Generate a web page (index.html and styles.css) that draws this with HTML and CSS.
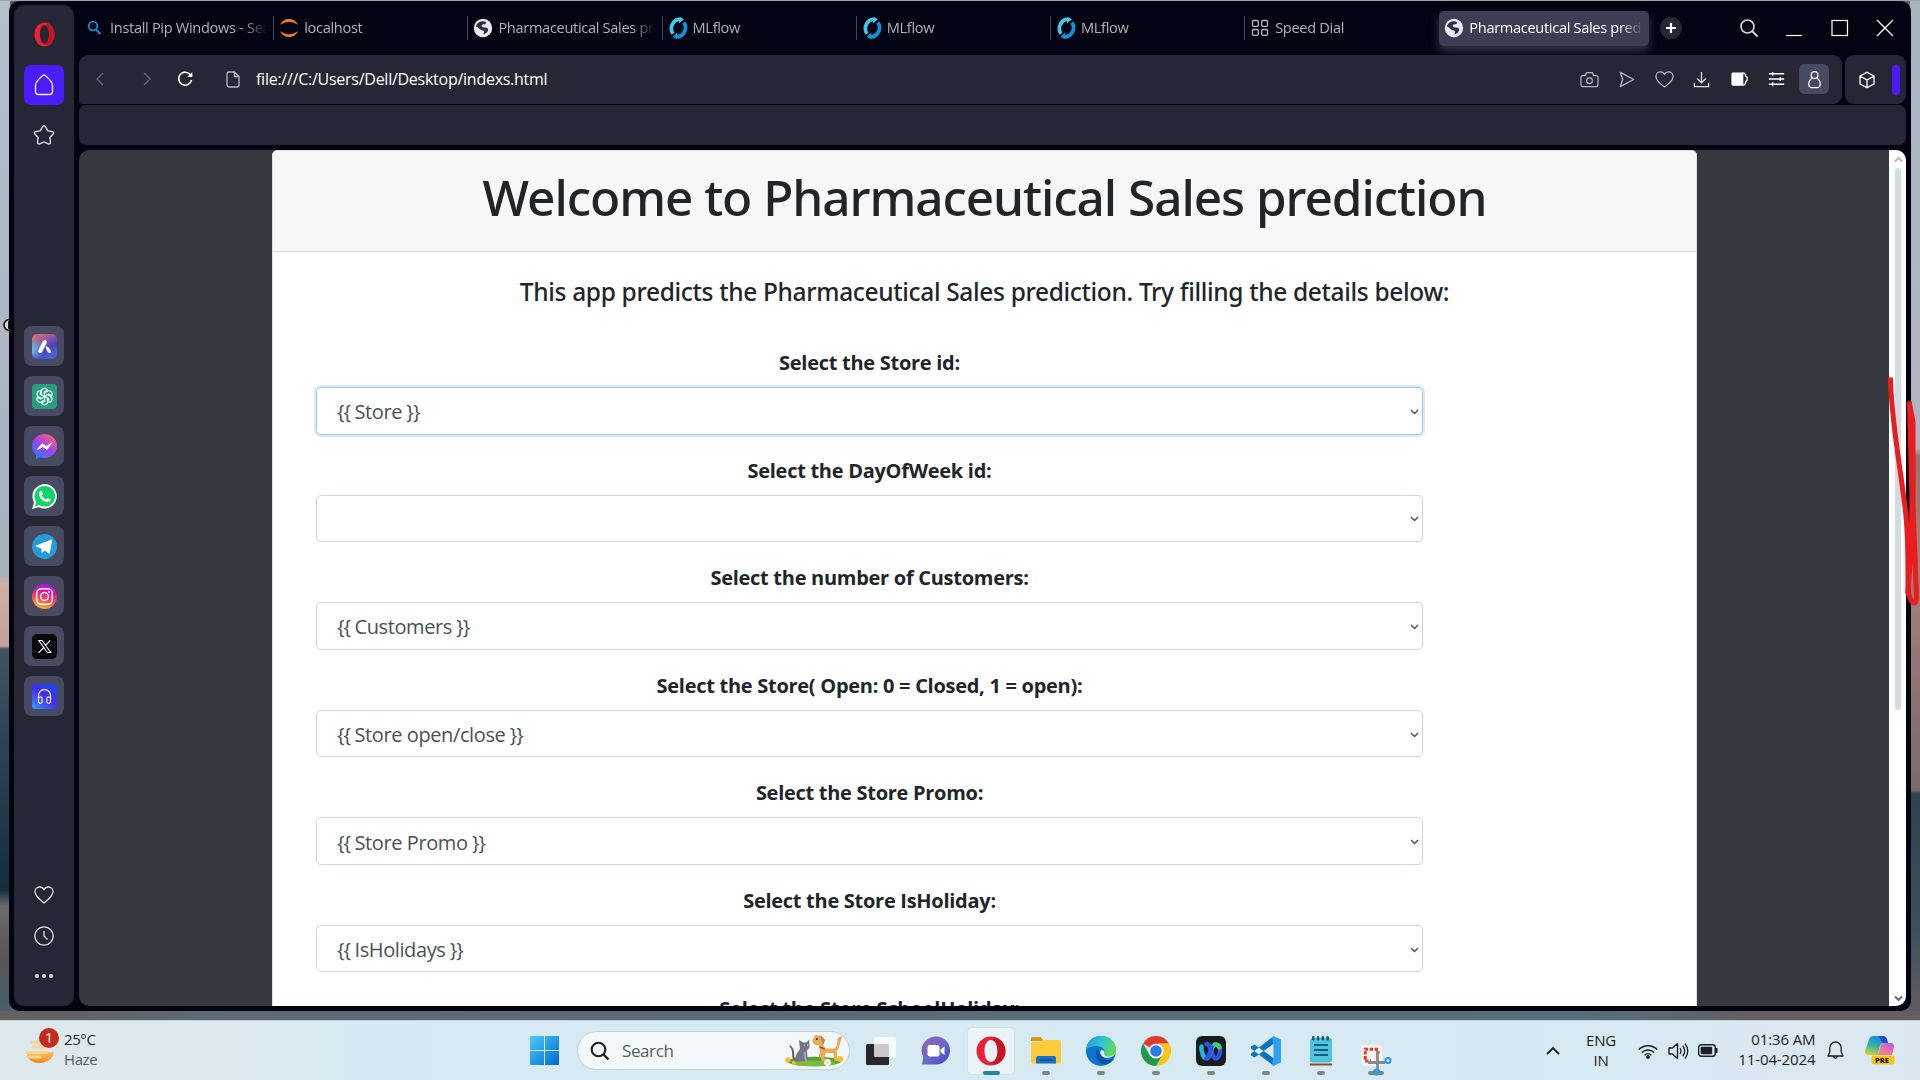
FILE: index.html
```html
<!DOCTYPE html>
<html lang="en">
<head>
<meta charset="utf-8">
<title>Pharmaceutical Sales prediction</title>
<link rel="stylesheet" href="styles.css">
</head>
<body>
<svg class="defs" width="0" height="0">
  <symbol id="globe" viewBox="0 0 20 20">
    <circle cx="10" cy="10" r="9.2" fill="#e6e9ef"/>
    <path d="M8 3.500c3-.8 5.500.3 5 1.800-1 1.500-3.500.4-4.300 2.300-.5 1.700 2 1.900 4 2 2.200.2 3 2 2 3.600-1 1.800-2.600 2.600-4.300 3.300l.8-3c-1.300-1.600-4.200-1.500-5.800-3.500-1-1.200-2-.8-2.600-1.200C3.200 6 5 4.300 8 3.500z" fill="#2c3040"/>
  </symbol>
  <symbol id="mlflow" viewBox="0 0 20 24">
    <path d="M4.500 18.300A9 10 0 0 1 13.800 2.800" fill="none" stroke="#43c9ed" stroke-width="4"/>
    <path d="M11.800 0 16.500 2.500 11 7z" fill="#43c9ed"/>
    <path d="M16.500 6A9 10 0 0 1 6.500 21.200" fill="none" stroke="#0b94e0" stroke-width="4"/>
    <path d="M9.200 16.500 9 23.500 4 21.500z" fill="#0b94e0"/>
  </symbol>
  <symbol id="opera" viewBox="0 0 30 30">
    <path fill-rule="evenodd" d="M15 .5a14.500 14.500 0 1 0 0 29a14.500 14.500 0 1 0 0-29zM15 4c4 0 6.500 4.600 6.500 11S19 26 15 26s-6.500-4.600-6.500-11S11 4 15 4z" fill="#ee1f36"/>
    <path d="M15 4c4 0 6.500 4.600 6.500 11S19 26 15 26c2.500 2.500 6.500 2.500 9.500 0 6.700-6 6.700-16 0-22-3-2.500-7-2.500-9.500 0z" fill="#b9101f" opacity=".75"/>
  </symbol>
  <symbol id="heart" viewBox="0 0 20 18">
    <path d="M10 17C4 12.500 1 9.500 1 5.800 1 3 3 1 5.500 1 7.500 1 9.200 2 10 3.800 10.800 2 12.500 1 14.500 1 17 1 19 3 19 5.800c0 3.700-3 6.700-9 11.200z" fill="none" stroke="currentColor" stroke-width="1.300" stroke-linejoin="round"/>
  </symbol>
</svg>

<div class="desktop">
  <div class="window">
    <aside class="sidebar">
      <a class="logo"><svg width="21" height="25" viewBox="0 0 30 30" preserveAspectRatio="none"><use href="#opera"/></svg></a>
      <a class="home"><svg width="20" height="22" viewBox="0 0 20 22"><path d="M1.500 11.500C1.500 8 7 3 8.800 1.500q1.200-.9 2.400 0C13 3 18.500 8 18.500 11.500V17.500a3 3 0 0 1-3 3h-11a3 3 0 0 1-3-3z" fill="none" stroke="#efeaff" stroke-width="1.400"/></svg></a>
      <a class="star"><svg width="22" height="21" viewBox="0 0 22 21"><path d="M9.700 1.500q1.300-1.600 2.600 0l2.300 4.200 4.700.9q2 .7.800 2.400l-3.200 3.500.6 4.900q-.2 2-2.200 1.400L11 16.900l-4.300 1.900q-2 .6-2.200-1.400l.6-4.900L1.900 9q-1.200-1.700.8-2.400l4.700-.9z" fill="none" stroke="#d9dbe4" stroke-width="1.400"/></svg></a>

      <div class="apps">
        <a class="app"><svg width="25" height="25" viewBox="0 0 25 25"><defs><linearGradient id="ga" x1="0" y1="0" x2=".6" y2="1"><stop offset="0" stop-color="#e8704a"/><stop offset=".35" stop-color="#a05c9c"/><stop offset=".7" stop-color="#4b41c0"/><stop offset="1" stop-color="#4763d8"/></linearGradient><radialGradient id="gb" cx="0" cy=".62" r=".5"><stop offset="0" stop-color="#62c6ea"/><stop offset="1" stop-color="#62c6ea" stop-opacity="0"/></radialGradient></defs><rect width="25" height="25" rx="5" fill="url(#ga)"/><rect width="25" height="25" rx="5" fill="url(#gb)"/><path d="M12.800 8 8.200 17" stroke="#fff" stroke-width="4" stroke-linecap="round"/><path d="M13.500 12.300c2.500 0 5.500 2.500 5.500 6.500-2 1.500-4.500-1.500-5.500-6.500z" fill="#fff"/></svg></a>
        <a class="app"><svg width="25" height="25" viewBox="0 0 25 25"><rect width="25" height="25" rx="4" fill="#2a9d80"/><g fill="none" stroke="#e8fff8" stroke-width="1.200" transform="translate(12.500 12.500)"><g id="petal"><path d="M-3.200-1.700V-5a3.300 3.300 0 0 1 6.200-1.500L-.2-4.700V.2"/></g><use href="#petal" transform="rotate(60)"/><use href="#petal" transform="rotate(120)"/><use href="#petal" transform="rotate(180)"/><use href="#petal" transform="rotate(240)"/><use href="#petal" transform="rotate(300)"/></g></svg></a>
        <a class="app"><svg width="25" height="25" viewBox="0 0 25 25"><defs><linearGradient id="gm" x1=".1" y1="1" x2=".8" y2="0"><stop offset="0" stop-color="#168bff"/><stop offset=".5" stop-color="#9c40f5"/><stop offset="1" stop-color="#ff5f72"/></linearGradient></defs><path d="M12.500 0C5.500 0 0 5 0 12c0 3.600 1.500 6.500 4 8.600V25l4-1.800c1.400.4 3 .7 4.500.7C19.500 23.900 25 19 25 12S19.500 0 12.500 0z" fill="url(#gm)"/><path d="M5 15.800 10.200 9.500l4 3L20 8.800 15 15.500l-4.300-3z" fill="#fff" stroke="#fff" stroke-linejoin="round"/></svg></a>
        <a class="app"><svg width="25" height="25" viewBox="0 0 25 25"><path d="M12.700 0A12.300 12.300 0 0 0 2 18.400L0 25l6.800-1.800A12.300 12.300 0 1 0 12.700 0z" fill="#fff"/><path d="M12.700 2a10.300 10.300 0 0 0-8.500 16l-1.300 4.200 4.400-1.200A10.300 10.300 0 1 0 12.700 2z" fill="#0fd467"/><path d="M8.700 6.700c.5-.2 1 0 1.200.5l1 2.400c.1.500-1 1.400-1 1.800.8 1.800 2.400 3.100 4.200 3.900.6 0 1.300-1.500 1.800-1.400l2.500 1.300c.5.500-.2 2.200-1 2.600-4.500 2-10.200-3.500-10.500-7.800 0-1.500.9-3 1.800-3.300z" fill="#fff"/></svg></a>
        <a class="app"><svg width="25" height="25" viewBox="0 0 25 25"><circle cx="12.500" cy="12.500" r="12.500" fill="#279bd6"/><path d="M4 12 19.800 5.800 17.200 19.300 12.700 16 10.200 18.500 9.700 14.200z" fill="#fff" stroke="#fff" stroke-linejoin="round" stroke-width=".8"/></svg></a>
        <a class="app"><svg width="25" height="25" viewBox="0 0 25 25"><defs><linearGradient id="gi" x1=".3" y1="1" x2=".6" y2="0"><stop offset="0" stop-color="#ffc62a"/><stop offset=".4" stop-color="#fb4a4f"/><stop offset=".7" stop-color="#e40fa4"/><stop offset="1" stop-color="#9d18ff"/></linearGradient></defs><circle cx="12.500" cy="12.500" r="12.500" fill="url(#gi)"/><g fill="none" stroke="#fff" stroke-width="1.500"><rect x="4.700" y="4.700" width="15.600" height="15.600" rx="4.500"/><circle cx="12.500" cy="12.500" r="3.900"/></g><circle cx="17" cy="8" r="1.100" fill="#fff"/></svg></a>
        <a class="app"><svg width="25" height="25" viewBox="0 0 25 25"><rect width="25" height="25" rx="5" fill="#08090b"/><path d="M6.800 6.500h3.300l8.600 12h-3.300zM18.200 6.300l-5 5.500M11.800 13.300l-5.200 5.500" fill="none" stroke="#fff" stroke-width="1.100"/></svg></a>
        <a class="app"><svg width="25" height="25" viewBox="0 0 25 25"><defs><linearGradient id="gp" x1="0" y1="1" x2=".8" y2="0"><stop offset="0" stop-color="#399cf2"/><stop offset=".55" stop-color="#442cf4"/><stop offset="1" stop-color="#1c49e3"/></linearGradient></defs><rect width="25" height="25" rx="3" fill="url(#gp)"/><g fill="none" stroke="#dcd8ff" stroke-width="1.300"><path d="M6.500 15.500V11.500a6 6 0 0 1 12 0V15.500"/><rect x="6.500" y="12.800" width="3.700" height="6.500" rx="1.700"/><rect x="14.800" y="12.800" width="3.700" height="6.500" rx="1.700"/></g></svg></a>
      </div>

      <div class="side-tools">
        <svg width="20" height="18"><use href="#heart"/></svg>
        <svg width="20" height="20" viewBox="0 0 20 20"><circle cx="10" cy="10" r="9.200" fill="none" stroke="currentColor" stroke-width="1.300"/><path d="M10 5v5l3.500 3.500" fill="none" stroke="currentColor" stroke-width="1.300"/></svg>
        <svg width="20" height="6" viewBox="0 0 20 6"><g fill="currentColor"><circle cx="3" cy="3" r="2"/><circle cx="10" cy="3" r="2"/><circle cx="17" cy="3" r="2"/></g></svg>
      </div>
    </aside>

    <main class="main">
      <div class="tabbar">
        <div class="tab"><svg class="ico" viewBox="0 0 20 20"><circle cx="8" cy="8" r="4.300" fill="none" stroke="#1c86dc" stroke-width="1.800"/><path d="m11 11.500 4.500 4.500" stroke="#1c86dc" stroke-width="1.900"/></svg><span>Install Pip Windows - Sea</span></div>
        <div class="tab"><svg class="ico" viewBox="0 0 20 20"><path d="M1 6.800Q4 1 10 1t9 5.800Q14 3.700 10 3.700T1 6.800zM1 13.200Q4 19 10 19t9-5.800q-5 3.100-9 3.100t-9-3.100z" fill="#ef7e2e"/></svg><span>localhost</span></div>
        <div class="tab"><svg class="ico"><use href="#globe"/></svg><span>Pharmaceutical Sales pre</span></div>
        <div class="tab"><svg class="ico"><use href="#mlflow"/></svg><span>MLflow</span></div>
        <div class="tab"><svg class="ico"><use href="#mlflow"/></svg><span>MLflow</span></div>
        <div class="tab"><svg class="ico"><use href="#mlflow"/></svg><span>MLflow</span></div>
        <div class="tab last"><svg class="ico" viewBox="0 0 20 20"><g fill="none" stroke="#b4b7c2" stroke-width="1.300"><rect x="2.500" y="2.500" width="5.800" height="5.800" rx="1"/><rect x="11.700" y="2.500" width="5.800" height="5.800" rx="1"/><rect x="2.500" y="11.500" width="5.800" height="5.800" rx="1"/><rect x="11.700" y="11.500" width="5.800" height="5.800" rx="1"/></g></svg><span>Speed Dial</span></div>
        <div class="tab active"><svg class="ico"><use href="#globe"/></svg><span>Pharmaceutical Sales pred</span></div>
        <div class="plus"><svg width="12" height="12" viewBox="0 0 12 12"><path d="M6 1v10M1 6h10" stroke="#fff" stroke-width="2.200"/></svg></div>
        <div class="winctl">
          <svg viewBox="0 0 20 20"><circle cx="8.500" cy="8.500" r="6.500" fill="none" stroke="#d6d8de" stroke-width="1.600"/><path d="m13 13 5.500 5.500" stroke="#d6d8de" stroke-width="1.800"/></svg>
          <svg viewBox="0 0 20 20"><path d="M2 17.500h16" stroke="#fff" stroke-width="1.200"/></svg>
          <svg viewBox="0 0 20 20"><rect x="2" y="2.500" width="15.500" height="15" fill="none" stroke="#fff" stroke-width="1.200"/></svg>
          <svg viewBox="0 0 20 20"><path d="m2 2 16 16M18 2 2 18" stroke="#fff" stroke-width="1.300"/></svg>
        </div>
      </div>

      <div class="toolbar">
        <div class="address">
          <span class="nav back"><svg width="10" height="14" viewBox="0 0 10 14"><path d="M8 1 2 7l6 6" fill="none" stroke="#656976" stroke-width="1.300"/></svg></span>
          <span class="nav fwd"><svg width="10" height="14" viewBox="0 0 10 14"><path d="m2 1 6 6-6 6" fill="none" stroke="#656976" stroke-width="1.300"/></svg></span>
          <span class="nav reload"><svg width="18" height="18" viewBox="0 0 18 18"><path d="M14.500 5A6.500 6.500 0 1 0 15.500 10" fill="none" stroke="#fff" stroke-width="1.600"/><path d="M16.300 2v5h-5z" fill="#fff"/></svg></span>
          <span class="nav file"><svg width="14" height="17" viewBox="0 0 14 17"><path d="M3 1h5.500L13 5.500V14a2 2 0 0 1-2 2H3a2 2 0 0 1-2-2V3a2 2 0 0 1 2-2zM8.500 1v4.500H13" fill="none" stroke="#b6b9c4" stroke-width="1.300"/></svg></span>
          <span class="url">file:///C:/Users/Dell/Desktop/indexs.html</span>
          <div class="tools">
            <span><svg viewBox="0 0 20 20"><path d="M3 6h2.500L7 2.800h6L14.500 6H17a2 2 0 0 1 2 2v7.500a2 2 0 0 1-2 2H3a2 2 0 0 1-2-2V8a2 2 0 0 1 2-2z" fill="none" stroke="#b4b7c2" stroke-width="1.300"/><circle cx="10" cy="11.300" r="3" fill="none" stroke="#b4b7c2" stroke-width="1.300"/></svg></span>
            <span><svg viewBox="0 0 20 20"><path d="M3.500 2.500 17.500 10 3.500 17.500 6 10z" fill="none" stroke="#b4b7c2" stroke-width="1.400" stroke-linejoin="round"/></svg></span>
            <span class="fav"><svg viewBox="0 0 20 18"><use href="#heart"/></svg></span>
            <span><svg viewBox="0 0 20 20"><path d="M10 2v11M5.500 9l4.500 4.500L14.500 9M2.500 13.500v4h15v-4" fill="none" stroke="#d9dbe3" stroke-width="1.400"/></svg></span>
            <span><svg viewBox="0 0 20 20"><rect x="1.500" y="2.500" width="12.500" height="14" rx="1.500" fill="#fff"/><path d="M13 3q3.500 0 3.500 3.500l1.500 1v3.500l-1.500 1q0 4-3.500 4" fill="none" stroke="#fff" stroke-width="1.300"/></svg></span>
            <span><svg viewBox="0 0 20 20"><path d="M2 4h16M2 9.500h16M2 15h16M6 2v4M14 7.500v4M6 13v4" fill="none" stroke="#fff" stroke-width="1.500"/></svg></span>
            <span class="profile"><svg viewBox="0 0 20 20"><circle cx="10" cy="5.300" r="3.600" fill="none" stroke="#fff" stroke-width="1.300"/><path d="M7.500 8.500C4.500 10.500 3.800 13 4 15.500q.3 3 3 3h6q2.700 0 3-3c.2-2.500-.5-5-3.500-7" fill="none" stroke="#fff" stroke-width="1.300"/></svg></span>
          </div>
        </div>
        <div class="ext"><svg width="18" height="18" viewBox="0 0 18 18"><path d="M9 1.200 16 5v8l-7 3.800L2 13V5zM2 5l7 4 7-4M9 9v7.800" fill="none" stroke="#fff" stroke-width="1.300" stroke-linejoin="round"/></svg><i></i></div>
      </div>
      <div class="bookmarks"></div>

      <div class="webview">
        <div class="page">
          <section class="card">
            <header><h1>Welcome to Pharmaceutical Sales prediction</h1></header>
            <h2>This app predicts the Pharmaceutical Sales prediction. Try filling the details below:</h2>
            <div class="form">
              <div class="group"><label>Select the Store id:</label><div class="select focus"><span><b>{{ </b>Store<b> }}</b></span><svg width="9" height="6" viewBox="0 0 9 6"><path d="m1 1 3.500 3.500L8 1"/></svg></div></div>
              <div class="group"><label>Select the DayOfWeek id:</label><div class="select"><span></span><svg width="9" height="6" viewBox="0 0 9 6"><path d="m1 1 3.500 3.500L8 1"/></svg></div></div>
              <div class="group"><label>Select the number of Customers:</label><div class="select"><span><b>{{ </b>Customers<b> }}</b></span><svg width="9" height="6" viewBox="0 0 9 6"><path d="m1 1 3.500 3.500L8 1"/></svg></div></div>
              <div class="group"><label>Select the Store( Open: 0 = Closed, 1 = open):</label><div class="select"><span><b>{{ </b>Store open/close<b> }}</b></span><svg width="9" height="6" viewBox="0 0 9 6"><path d="m1 1 3.500 3.500L8 1"/></svg></div></div>
              <div class="group"><label>Select the Store Promo:</label><div class="select"><span><b>{{ </b>Store Promo<b> }}</b></span><svg width="9" height="6" viewBox="0 0 9 6"><path d="m1 1 3.500 3.500L8 1"/></svg></div></div>
              <div class="group"><label>Select the Store IsHoliday:</label><div class="select"><span><b>{{ </b>IsHolidays<b> }}</b></span><svg width="9" height="6" viewBox="0 0 9 6"><path d="m1 1 3.500 3.500L8 1"/></svg></div></div>
              <div class="group"><label>Select the Store SchoolHoliday:</label></div>
            </div>
          </section>
        </div>
        <div class="scroll">
          <svg width="9" height="7" viewBox="0 0 9 7"><path d="m1 5.500 3.500-3.500L8 5.500" fill="none" stroke="#b5b8bb" stroke-width="2"/></svg>
          <div class="track"><div class="thumb"></div></div>
          <svg width="9" height="7" viewBox="0 0 9 7"><path d="m1 1.500 3.500 3.500L8 1.500" fill="none" stroke="#6a6d70" stroke-width="2"/></svg>
        </div>
      </div>
    </main>
  </div>
  <svg class="cursor" width="7" height="14" viewBox="0 0 7 14"><circle cx="7.500" cy="7" r="5.500" fill="#ded7c8" stroke="#111" stroke-width="1.600"/><path d="M7 3v8" stroke="#222" stroke-width="2"/></svg>
  <svg class="scribble" width="40" height="280" viewBox="1880 350 40 280"><g fill="none" stroke="#e91c1e" stroke-width="5" stroke-linecap="square" stroke-linejoin="round"><path d="M1890.500 380C1892 425 1900 465 1904 500C1908 525 1908 555 1908 592"/><path d="M1909.500 404 1913 422V505L1916.500 598Q1915 607 1911 600L1908 592 1911 550 1912 500 1909.500 404"/></g><path d="M1908 404 1915 420V505L1910 490z" fill="#e91c1e"/></svg>
</div>

<footer class="taskbar">
  <div class="weather">
    <svg width="36" height="38" viewBox="0 0 36 38"><defs><linearGradient id="gw" x1="0" y1="0" x2="0" y2="1"><stop offset="0" stop-color="#fbc65c"/><stop offset="1" stop-color="#f0861d"/></linearGradient></defs><path d="M2 24h27a14.500 12 0 0 1-27 5z" fill="url(#gw)"/><g stroke="#f7d68d" stroke-width="3" stroke-linecap="round"><path d="M7 14h5M8 19h14M2 24.500h20M3 29h12"/></g><circle cx="24" cy="10" r="10" fill="#c42b1c"/><text x="20" y="15.300" fill="#fff" class="badge">1</text></svg>
    <p><span>25°C</span><em>Haze</em></p>
  </div>
  <div class="cell start"><svg width="29" height="29" viewBox="0 0 29 29"><defs><linearGradient id="gs" x1="0" y1="0" x2="1" y2="1"><stop offset="0" stop-color="#4ccbfb"/><stop offset="1" stop-color="#0069cf"/></linearGradient></defs><path d="M1 0h13v14H0V1a1 1 0 0 1 1-1zM15 0h13a1 1 0 0 1 1 1v13H15zM0 15h14v14H1a1 1 0 0 1-1-1zM15 15h14v13a1 1 0 0 1-1 1H15z" fill="url(#gs)"/></svg></div>
  <div class="search">
    <svg width="20" height="20" viewBox="0 0 20 20"><circle cx="8.500" cy="8.500" r="6.800" fill="none" stroke="#222" stroke-width="2.100"/><path d="m13.500 13.500 5 5" stroke="#222" stroke-width="2.400"/></svg>
    <span>Search</span>
    <svg class="pets" width="60" height="33" viewBox="0 0 62 33" preserveAspectRatio="none"><ellipse cx="31" cy="27.500" rx="28" ry="4.800" fill="#58a532"/><ellipse cx="31" cy="29.500" rx="22" ry="2.800" fill="#79bd3c"/><path d="M13 26C6 25 13 16 6 12" fill="none" stroke="#5d5a70" stroke-width="2"/><path d="M12 27c-1-7 3-9 4.500-12L15.500 6l4 2.500h3.500l3-3 .5 7.500q-1 3-3 3.500l1.500 11z" fill="#767389"/><path d="M21 18l2 10" stroke="#a9a7b8" stroke-width="2"/><circle cx="21" cy="11.500" r=".8" fill="#e7d34c"/><circle cx="24.500" cy="11" r=".8" fill="#e7d34c"/><path d="M29 7l3-6 6 .5 3 4-1 5 3 4h9q4-2 3-10l4-2.500q2 1 0 3.500l-2 7q-1 4-2.500 5L55 27h-3l-1-8h-8l-1 8h-3l-2-9-1-7q-5 1-7-4z" fill="#e7ac59"/><path d="M38 2l4 4-1.500 4zM37 20v7" fill="#c7823c" stroke="#c7823c"/><circle cx="34" cy="5" r="1" fill="#332"/><path d="m37 13 5 2" stroke="#cf3838" stroke-width="1.500"/><g fill="#f8be26"><circle cx="4" cy="26" r="2.800"/><circle cx="58" cy="25" r="3"/><circle cx="10" cy="29" r="2"/></g><circle cx="45" cy="28.500" r="3.400" fill="#fff"/><circle cx="45" cy="28.500" r="1" fill="#f6c23a"/></svg>
  </div>
  <div class="cell view"><svg width="31" height="30" viewBox="0 0 31 30"><rect x="0" y="8" width="23" height="21" rx="1.500" fill="#292929"/><rect x="8" y="1" width="22" height="20" rx="1.500" fill="#fff" fill-opacity=".75"/></svg></div>
  <div class="cell chat"><svg width="29" height="29" viewBox="0 0 29 29"><defs><linearGradient id="gc" x1="0" y1="0" x2="1" y2="1"><stop offset="0" stop-color="#9762a9"/><stop offset=".5" stop-color="#6c69ca"/><stop offset="1" stop-color="#4448c4"/></linearGradient></defs><path d="M15 .5A14 14 0 1 1 15 28.500H1L2.200 21A14 14 0 0 1 15 .500z" fill="url(#gc)"/><rect x="6.500" y="9" width="12" height="11.500" rx="2" fill="#fff"/><path d="m19.500 13.500 4-3v8.500l-4-3z" fill="#fff"/></svg></div>
  <div class="cell on opera"><svg width="30" height="30"><use href="#opera"/></svg></div>
  <div class="cell on"><svg width="30" height="27" viewBox="0 0 30 27"><path d="M0 1.500A1.500 1.500 0 0 1 1.500 0H9.500L13 4H0z" fill="#d39a12"/><path d="M0 5h9l3-2h16.500A1.500 1.500 0 0 1 30 4.500V25a1.500 1.500 0 0 1-1.500 1.500h-27A1.500 1.500 0 0 1 0 25z" fill="#fccb3c"/><path d="M5 26.500V21a2 2 0 0 1 2-2h16a2 2 0 0 1 2 2v5.500z" fill="#1670c8"/><path d="M9 23h12" stroke="#0b4f98" stroke-width="1.400"/></svg></div>
  <div class="cell on"><svg width="30" height="30" viewBox="0 0 30 30"><defs><linearGradient id="ge" x1="0" y1=".2" x2="1" y2=".6"><stop offset="0" stop-color="#159bdc"/><stop offset=".5" stop-color="#34c4cf"/><stop offset="1" stop-color="#63dc4c"/></linearGradient></defs><circle cx="15" cy="15" r="15" fill="#0c74cf"/><path d="M0 14C1 5 7 0 15 0c9 0 15 6 15 13 0 5-4 7.500-8 7.500-3.500 0-4.500-1.500-3.500-3.500 1-3-2-7-7.500-7C6 10 1.500 12 0 14z" fill="url(#ge)"/><path d="M12.500 13c-5 4-2 13 5 15 4 .5 8.500-2 10.500-5-7 3-14 0-15.500-10z" fill="#134f9c"/><path d="M30 14.500c0 6-8 9-12.500 6.500-3.500-2-4-5-2-7.500 3 1 3.500 3 2.700 4.500 2 3 9 3 11.800-3.500zM28.500 22.500 30 18v6z" fill="#d9eaf1"/><path d="M30 13c-.5 5-4 7.500-8 7.500q-3 0-3.700-1.500C20 16 30 17 30 13z" fill="#63dc4c"/></svg></div>
  <div class="cell on"><svg width="30" height="30" viewBox="0 0 30 30"><path d="M15 15 2 7.500A15 15 0 0 1 28 7.500L15 8z" fill="#e23b30"/><path d="M28 7.500A15 15 0 0 1 15 30l6.500-11.300A7.500 7.500 0 0 0 15 7.500z" fill="#fcc419"/><path d="M15 30A15 15 0 0 1 2 7.500L8.500 18.700A7.500 7.500 0 0 0 21.500 18.700z" fill="#209a4b"/><circle cx="15" cy="15" r="7.300" fill="#fff"/><circle cx="15" cy="15" r="5.800" fill="#2f79e8"/></svg></div>
  <div class="cell on"><svg width="30" height="30" viewBox="0 0 30 30"><rect width="30" height="30" rx="6" fill="#1a1b1c"/><g fill="none" stroke-linecap="round" stroke-width="4.500"><path d="M22 9.500C26 11 24 22 19.500 22.500 15 22 16 8 10.500 8" stroke="#2d53e8"/><path d="M5.500 10.500C5 14 7 22.500 10.500 22.500c4 0 4-13.500 9-14" stroke="#16b8ea"/><path d="M19 8.500q3-.5 4.500 3" stroke="#40cf62"/><path d="M10.500 22.500c3-1 3.500-8 5-11" stroke="#2d53e8"/></g></svg></div>
  <div class="cell on"><svg width="30" height="30" viewBox="0 0 30 30"><path d="M0 10.500 3.500 8.500 23 22.500V30L0 12.500zM0 19.500 3.500 21.500 23 7.500V0L0 17.500z" fill="#0a72bd"/><path d="M22 0 30 3.500V26.500L22 30 21 28.500 22.500 21V9L21 2z" fill="#2ba3ee"/></svg></div>
  <div class="cell on"><svg width="24" height="30" viewBox="0 0 24 30"><rect x="1" y="2" width="22" height="24.500" rx="2" fill="#4fc3dc"/><path d="M5 9h14M5 14h14M5 19h14" stroke="#12607d" stroke-width="1.800"/><g fill="#155a78"><rect x="3" y="0" width="2.500" height="4.500" rx="1.200"/><rect x="7.800" y="0" width="2.500" height="4.500" rx="1.200"/><rect x="12.600" y="0" width="2.500" height="4.500" rx="1.200"/><rect x="17.400" y="0" width="2.500" height="4.500" rx="1.200"/></g><path d="M1 28.500h22" stroke="#8a4c22" stroke-width="2"/></svg></div>
  <div class="cell on snip"><svg width="31" height="31" viewBox="0 0 31 31"><rect x="0" y="0" width="21" height="21" rx="3" fill="#f7f0ee"/><path d="M17 9V4.200H4.200V16H10" fill="none" stroke="#cf4326" stroke-width="3" stroke-dasharray="3.300 1.600"/><path d="M16.500 6v19M7 17.500h17" stroke="#858b90" stroke-width="2.800"/><circle cx="27" cy="15.500" r="2.500" fill="none" stroke="#2697dc" stroke-width="2"/><circle cx="15.500" cy="27" r="2.500" fill="none" stroke="#2697dc" stroke-width="2"/></svg></div>

  <div class="tray">
    <div class="chev"><svg width="14" height="9" viewBox="0 0 14 9"><path d="m1 8 6-6 6 6" fill="none" stroke="#1b1e22" stroke-width="1.800"/></svg></div>
    <div class="lang">ENG<br>IN</div>
    <div class="ti"><svg width="20" height="16" viewBox="0 0 20 16"><g fill="none" stroke="#1b1e22" stroke-width="1.500"><path d="M.8 6.500a13 13 0 0 1 18.400 0M3.800 9.500a8.800 8.800 0 0 1 12.400 0M6.700 12.200a4.700 4.700 0 0 1 6.600 0"/></g><circle cx="10" cy="14" r="1.900" fill="#1b1e22"/></svg></div>
    <div class="ti"><svg width="21" height="18" viewBox="0 0 21 18"><path d="M1 6h3.500L9.500 1.500v15L4.500 12H1z" fill="none" stroke="#1b1e22" stroke-width="1.400" stroke-linejoin="round"/><path d="M12 6q2 3 0 6M14.700 3.700q4 5.300 0 10.600M17 1.500q5.500 7.500 0 15" fill="none" stroke="#1b1e22" stroke-width="1.300"/></svg></div>
    <div class="ti"><svg width="20" height="13" viewBox="0 0 20 13"><rect x=".7" y=".7" width="16.500" height="11.600" rx="2.500" fill="none" stroke="#1b1e22" stroke-width="1.400"/><rect x="2.700" y="2.700" width="11.500" height="7.600" rx="1" fill="#1b1e22"/><path d="M18.500 4v5" stroke="#1b1e22" stroke-width="2"/></svg></div>
    <div class="clock">01:36 AM<br>11-04-2024</div>
    <div class="ti bell"><svg width="17" height="19" viewBox="0 0 17 19"><path d="M8.500 1a5.700 5.700 0 0 0-5.700 5.700V11L1 15h15l-1.800-4V6.700A5.700 5.700 0 0 0 8.500 1zM6.500 15.500q2 3.500 4 0" fill="none" stroke="#1b1e22" stroke-width="1.300" stroke-linejoin="round"/></svg></div>
    <div class="copilot"><svg width="30" height="29" viewBox="0 0 30 29"><defs><linearGradient id="g1" x1=".5" y1="0" x2=".2" y2="1"><stop offset="0" stop-color="#1c88e4"/><stop offset=".5" stop-color="#32b2a4"/><stop offset="1" stop-color="#d7d331"/></linearGradient><linearGradient id="g2" x1="1" y1="0" x2="0" y2="1"><stop offset="0" stop-color="#a45be8"/><stop offset=".5" stop-color="#ef6fae"/><stop offset="1" stop-color="#f79b4c"/></linearGradient></defs><path d="M8 0h10q3 0 4 3.500l1 3.500h-4q-3 0-4 3l-2.500 9H4Q-1 19 .500 13.500L4 3.500Q5 0 8 0z" fill="url(#g1)"/><path d="M14 0h4q3 0 4 3.500L23 7h-6z" fill="#1e4fd3"/><path d="M19 7h6q5 0 3.800 5L27 19H10q3 0 4-3.500l1.500-5.500q1-3 3.500-3z" fill="url(#g2)"/><rect x="6.500" y="19.500" width="23" height="9" rx="2" fill="#fbc314"/><text class="pre" x="10" y="27">PRE</text></svg></div>
  </div>
</footer>
</body>
</html>
```
FILE: styles.css
```css
* { box-sizing: border-box; }
body {
  margin: 0;
  width: 1920px;
  height: 1080px;
  overflow: hidden;
  display: flex;
  flex-direction: column;
  font-family: "Open Sans", "Noto Sans", sans-serif;
  color: #212529;
}
svg { display: block; flex: none; }
.defs { position: absolute; }

/* desktop and browser window */
.desktop {
  position: relative;
  height: 1020px;
  padding: 1px 9px 9px;
  background:
    linear-gradient(#9ba3ad 0 0) 0 0 / 1920px 1px no-repeat,
    linear-gradient(90deg, #655f60, #5c6a74 12%, #5b6d78 60%, #54707c 82%, #655d5f 92%) 0 100% / 1920px 9px no-repeat,
    linear-gradient(#b4bfca 0, #a8b0ba 575px, #cdb0a9 583px, #c3a09b 646px, #3d5360 649px, #122f3d 890px, #6b6a6b 906px, #5a5556 960px, #47606e 1010px) 0 0 / 10px 1011px no-repeat,
    linear-gradient(#a9b4bf 0, #b2b3bf 448px, #96746f 456px, #a68078 560px, #7a6a6d 790px, #2c4450 794px, #3c505b 930px, #5f5a60 1000px) 100% 0 / 10px 1011px no-repeat,
    #5b6570;
}
.window {
  height: 1010px;
  padding: 0 5px 5px;
  display: flex;
  gap: 5px;
  background: #020511;
  border-radius: 10px;
}
.sidebar {
  width: 60px;
  margin-top: 4px;
  display: flex;
  flex-direction: column;
  align-items: center;
  background: #252834;
  border-radius: 10px;
}
.logo { margin-top: 17px; }
.home {
  width: 40px;
  height: 40px;
  margin-top: 18px;
  display: flex;
  align-items: center;
  justify-content: center;
  background: #4b1cff;
  border-radius: 7px;
}
.star { margin-top: 20px; }
.apps {
  margin-top: 180px;
  display: flex;
  flex-direction: column;
  gap: 10px;
}
.app {
  width: 40px;
  height: 40px;
  display: flex;
  align-items: center;
  justify-content: center;
  background: #474a61;
  border-radius: 8px;
}
.side-tools {
  margin-top: auto;
  padding-bottom: 27px;
  display: flex;
  flex-direction: column;
  gap: 22px;
  color: #dfe1e8;
}
.side-tools svg:last-child { margin-top: 5px; }

.main {
  width: 1827px;
  display: flex;
  flex-direction: column;
}

/* tab strip */
.tabbar {
  height: 54px;
  padding-left: 1px;
  display: flex;
  align-items: center;
}
.tab {
  width: 194.2px;
  height: 24px;
  padding: 0 6px 0 5px;
  display: flex;
  align-items: center;
  gap: 5px;
  border-right: 1px solid #444753;
  color: #afb2b9;
  font-size: 14.6px;
  letter-spacing: -.32px;
  white-space: nowrap;
}
.tab.last { border-color: transparent; }
.tab .ico { width: 20px; height: 22px; }
.tab span {
  flex: 1;
  padding-bottom: 2px;
  overflow: hidden;
  -webkit-mask-image: linear-gradient(90deg, #000 calc(100% - 24px), transparent);
  mask-image: linear-gradient(90deg, #000 calc(100% - 24px), transparent);
}
.tab.active {
  width: 210px;
  height: 35px;
  border: 0;
  border-radius: 5px;
  background: #3c3e54;
  color: #fff;
  box-shadow: 0 5px 10px #343746;
}
.plus {
  width: 22px;
  height: 22px;
  margin-left: 11px;
  display: flex;
  align-items: center;
  justify-content: center;
  border-radius: 50%;
  background: #252834;
}
.winctl {
  margin-left: auto;
  margin-right: 11px;
  display: flex;
  gap: 25.5px;
}
.winctl svg { width: 20px; height: 20px; }

/* address row */
.toolbar {
  height: 49px;
  margin-bottom: 1px;
  display: flex;
  gap: 3px;
}
.address {
  flex: 1;
  display: flex;
  align-items: center;
  padding-right: 9px;
  padding-bottom: 1px;
  background: #252834;
  border-radius: 9px 9px 9px 3px;
}
.nav { display: flex; justify-content: center; }
.back { width: 41px; }
.fwd { width: 54px; }
.reload { width: 21px; }
.file { width: 24px; margin-left: 26px; }
.url {
  margin-left: 11px;
  color: #fff;
  font-size: 16px;
  letter-spacing: -.26px;
}
.tools { margin-left: auto; display: flex; }
.tools span {
  width: 37.5px;
  height: 30px;
  display: flex;
  align-items: center;
  justify-content: center;
}
.tools svg { width: 19px; height: 19px; }
.tools .fav { color: #b4b7c2; }
.tools .profile {
  width: 30px;
  margin: 0 3.75px;
  border-radius: 6px;
  background: #474a61;
}
.ext {
  width: 61px;
  display: flex;
  align-items: center;
  gap: 16px;
  padding-left: 13px;
  background: #252834;
  border-radius: 9px;
}
.ext i {
  width: 8px;
  height: 30px;
  border-radius: 4px;
  background: #4b1cff;
}
.bookmarks {
  height: 40px;
  margin-bottom: 5px;
  background: #252834;
  border-radius: 7px;
}

/* web page */
.webview {
  height: 856px;
  display: flex;
  overflow: hidden;
  border-radius: 10px;
  background: #343a40;
}
.page { width: 1810px; padding-left: 193px; }
.card {
  width: 1425px;
  border: 1px solid #dfdfdf;
  border-radius: 5px 5px 0 0;
  background: #fff;
}
.card header {
  height: 101px;
  padding-top: 16px;
  border-bottom: 1px solid #d7d7d7;
  border-radius: 5px 5px 0 0;
  background: #f7f7f7;
}
h1, h2 {
  margin: 0;
  font-family: "Noto Sans", sans-serif;
  font-weight: 500;
  text-align: center;
  white-space: nowrap;
}
h1 { font-size: 49.5px; line-height: 60px; letter-spacing: -1.05px; }
h2 { margin-top: 25px; font-size: 24.5px; line-height: 30px; letter-spacing: -.34px; }
.form { width: 1107px; margin: 41px 0 0 43px; }
.group { height: 107.6px; }
label {
  display: block;
  font-size: 20px;
  line-height: 30px;
  font-weight: 700;
  letter-spacing: -.28px;
  text-align: center;
}
.select {
  height: 47.5px;
  margin-top: 9px;
  padding: 2px 3.5px 0 20px;
  display: flex;
  align-items: center;
  justify-content: space-between;
  border: 1px solid #ced4da;
  border-radius: 5px;
  color: #495057;
  font-size: 20px;
  letter-spacing: -.4px;
  white-space: pre;
}
.select b { font-weight: 400; letter-spacing: -.9px; }
.select path { fill: none; stroke: #4a4f54; stroke-width: 1.4; }
.select.focus { border-color: #9fc5ea; box-shadow: 0 0 0 2px #d9ebfb; }
.scroll {
  width: 17px;
  padding: 6px 0 4px 1px;
  display: flex;
  flex-direction: column;
  align-items: center;
  gap: 3px;
  background: #fff;
}
.track { flex: 1; }
.thumb {
  width: 6px;
  height: 542px;
  margin-top: 2px;
  border-radius: 3px;
  background: #d1dbe3;
}
.cursor { position: absolute; left: 2px; top: 318px; }
.scribble { position: absolute; left: 1880px; top: 350px; }

/* taskbar */
.taskbar {
  height: 60px;
  display: flex;
  align-items: center;
  border-top: 1px solid #c3d2d9;
  background: linear-gradient(90deg, #dde8eb, #d7e9f0 18%, #d6e9f1 80%, #dbe7ef);
  font-size: 15px;
  line-height: 20px;
}
.weather {
  width: 517px;
  padding-left: 25px;
  display: flex;
  align-items: center;
  gap: 3px;
}
.weather svg { margin-top: -7px; }
.weather p { margin: 0; padding-bottom: 4px; display: flex; flex-direction: column; letter-spacing: -.4px; }
.weather em { font-style: normal; color: #555c61; }
.badge { font-size: 14px; }
.cell {
  width: 55px;
  height: 60px;
  display: flex;
  align-items: center;
  justify-content: center;
  position: relative;
}
.search {
  width: 273px;
  height: 39px;
  margin: 0 4px 0 5px;
  padding: 0 5px 0 12px;
  display: flex;
  align-items: center;
  border: 1px solid #c2d1da;
  border-radius: 20px;
  background: #f3f8fb;
}
.search span { margin-left: 12px; font-size: 17px; letter-spacing: -.4px; color: #565b5f; }
.pets { margin-left: auto; }
.view { width: 54px; }
.opera {
  width: 48px;
  height: 48px;
  margin: 0 3.5px 0 4px;
  border-radius: 5px;
  border: 1px solid #d3e1e8;
  background: #eaf3f8;
}
.on::after {
  content: "";
  position: absolute;
  left: 50%;
  bottom: 6px;
  width: 8px;
  height: 4px;
  margin-left: -4px;
  border-radius: 2px;
  background: #7d878b;
}
.on.opera::after { bottom: -1px; width: 17px; margin-left: -8.500px; background: #1e8a93; }
.snip { padding-top: 20px; }
.snip svg { z-index: 1; }
.snip::after { width: 16px; margin-left: -8px; }
.tray { margin-left: auto; padding-right: 10px; display: flex; align-items: center; color: #1b1e22; }
.chev { width: 40px; display: flex; justify-content: center; }
.lang { width: 56px; padding-bottom: 2px; text-align: center; letter-spacing: -.2px; margin-right: 4px; }
.ti { width: 30px; display: flex; justify-content: center; }
.clock { width: 92.5px; padding-bottom: 4px; text-align: right; letter-spacing: -.1px; }
.bell { margin-left: 4.5px; }
.copilot { width: 60px; display: flex; justify-content: center; }
.pre { font-size: 7.5px; font-weight: 800; fill: #1a1a1a; }
```
